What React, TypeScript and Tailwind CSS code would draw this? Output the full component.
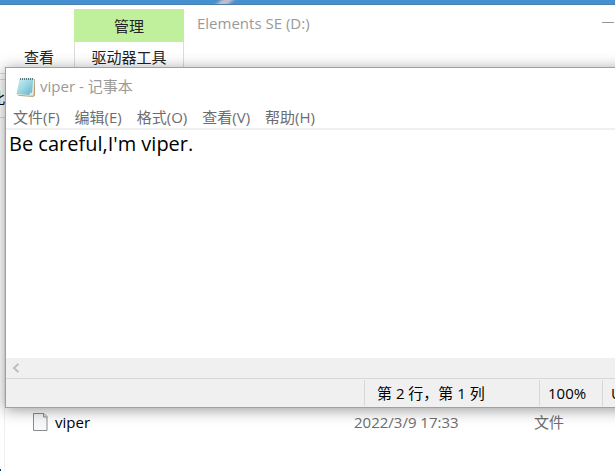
const uiFont = "font-['Open_Sans','Noto_Sans_CJK_SC',sans-serif]";

function NotepadIcon() {
  return (
    <svg className="h-5 w-5 shrink-0" viewBox="0 0 20 20" aria-hidden="true">
      <defs>
        <linearGradient id="cover" x1="0" y1="0" x2="1" y2="1">
          <stop offset="0" stopColor="#d2eff5" />
          <stop offset="0.5" stopColor="#9ad6e3" />
          <stop offset="1" stopColor="#5fafc8" />
        </linearGradient>
      </defs>
      <path d="M5 2.5 19 2 19 18.500 17 20 4 19 1 18z" fill="#b5a283" />
      <path d="M5 2 18.300 1.500 17.500 18.500 14 18.800 1 17.800z" fill="#f0ead9" />
      <path d="M3.600 1.500 17.300 1.500 16 16 13.500 18 .5 17z" fill="url(#cover)" />
      <path d="M13.500 18 14.200 15.500 16 16z" fill="#e2f3f6" />
      <path d="M4.500 1v2M6.500 1v2M8.500 1v2M10.500 1v2M12.500 1v2M14.500 1v2M16.500 1v2" stroke="#587681" strokeWidth="1" />
    </svg>
  );
}

function FileIcon() {
  return (
    <svg className="h-[18px] w-[15px] shrink-0" viewBox="0 0 15 18" aria-hidden="true">
      <path d="M.5.5h10.500l3 3v14H.5z" fill="#f6f8fa" stroke="#8b8b8b" />
      <path d="M10.500.5v3.500h3.500" fill="#dfe3e6" stroke="#8b8b8b" />
    </svg>
  );
}

const menus = ["文件(F)", "编辑(E)", "格式(O)", "查看(V)", "帮助(H)"];

function Explorer() {
  return (
    <section className="flex min-h-screen flex-col bg-white">
      <div className="relative h-[5px] overflow-hidden border-b border-[#4a7fab] bg-[#4590d0]">
        <div className="absolute -top-1 left-[219px] h-3 w-3 skew-x-[-50deg] bg-[#c3bdc9] blur-[2px]" />
      </div>
      <header className="flex h-[69px] items-stretch border-b border-[#dadada] pt-1">
        <button className="w-[74px] pt-[31px] pl-[4px] text-[15px] leading-[30px] text-[#222]">查看</button>
        <div className="flex w-[110px] flex-col text-center text-[15px] text-[#222]">
          <div className="h-[33px] bg-[#c1f09c] leading-[34px]">管理</div>
          <button className="flex-1 border-x border-[#dcdcdc] pb-[2px] leading-[28px]">驱动器工具</button>
        </div>
        <h1 className="ml-[13px] text-[15px] leading-[28px] text-[#999]">Elements SE (D:)</h1>
        <button aria-label="最小化" className="-mr-2 ml-auto flex h-[27px] w-[21px] items-center">
          <span className="h-px w-3 bg-[#999]" />
        </button>
      </header>
      <div className="flex h-[44px] flex-col border-b border-[#dadada] pt-[5px]">
        <div className="flex flex-1 items-center overflow-hidden border-t border-[#dadada] text-[15px] text-black">
          <span className="-ml-[10px]">此电脑</span>
        </div>
      </div>
      <div className="flex flex-1">
        <nav className="flex w-[5px] flex-col justify-end border-r border-[#f0f0f0]">
          <span className="h-[2px] w-px bg-[#003c8f]" />
        </nav>
        <table className="mt-[288px] h-8 w-[610px] table-fixed self-start text-left text-[15px] leading-8">
          <tbody>
            <tr>
              <td className="w-[349px] pl-7">
                <div className="flex items-center gap-[7px] text-black">
                  <FileIcon />
                  <span>viper</span>
                </div>
              </td>
              <td className="w-[180px] text-[#6d6d6d]">2022/3/9 17:33</td>
              <td className="text-[#6d6d6d]">文件</td>
            </tr>
          </tbody>
        </table>
      </div>
    </section>
  );
}

function Notepad() {
  return (
    <section className="absolute top-[67px] -right-10 left-[5px] flex flex-col border border-[#a0a0a0] bg-white shadow-[0_2px_14px_rgba(0,0,0,0.4)]">
      <header className="flex h-[37px] items-center gap-[4px] pl-[10px] text-[15px] text-[#999]">
        <NotepadIcon />
        <h2>viper - 记事本</h2>
      </header>
      <div className="flex h-[25px] items-center gap-[15px] border-b-2 border-[#f0f0f0] pl-[7px] text-[15px] leading-6 text-[#6d6d6d]">
        {menus.map((m) => (
          <button key={m}>{m}</button>
        ))}
      </div>
      <textarea
        aria-label="文本编辑器"
        className="block h-[228px] w-full resize-none overflow-hidden pl-[3px] text-[20px] leading-7 text-black outline-none"
        defaultValue="Be careful,I'm viper."
      />
      <div className="flex h-5 items-center bg-[#f0f0f0] pl-[6px]">
        <button aria-label="向左滚动">
          <svg className="h-[10px] w-2" viewBox="0 0 8 10" fill="none" aria-hidden="true">
            <path d="M6.5.8 2 5l4.500 4.200" stroke="#bfbfbf" strokeWidth="2" />
          </svg>
        </button>
      </div>
      <footer className="flex h-[29px] border-t border-[#d7d7d7] bg-[#f0f0f0] py-px text-[15px] leading-[27px] whitespace-nowrap text-black">
        <span className="flex-1" />
        <span className="w-[175px] border-l border-[#d7d7d7] pl-3">第 2 行，第 1 列</span>
        <span className="w-[63px] border-l border-[#d7d7d7] pl-2">100%</span>
        <span className="w-[52px] border-l border-[#d7d7d7] pl-2">UTF-8</span>
      </footer>
    </section>
  );
}

export default function App() {
  return (
    <main className={`relative min-h-screen overflow-hidden ${uiFont}`}>
      <Explorer />
      <Notepad />
    </main>
  );
}
